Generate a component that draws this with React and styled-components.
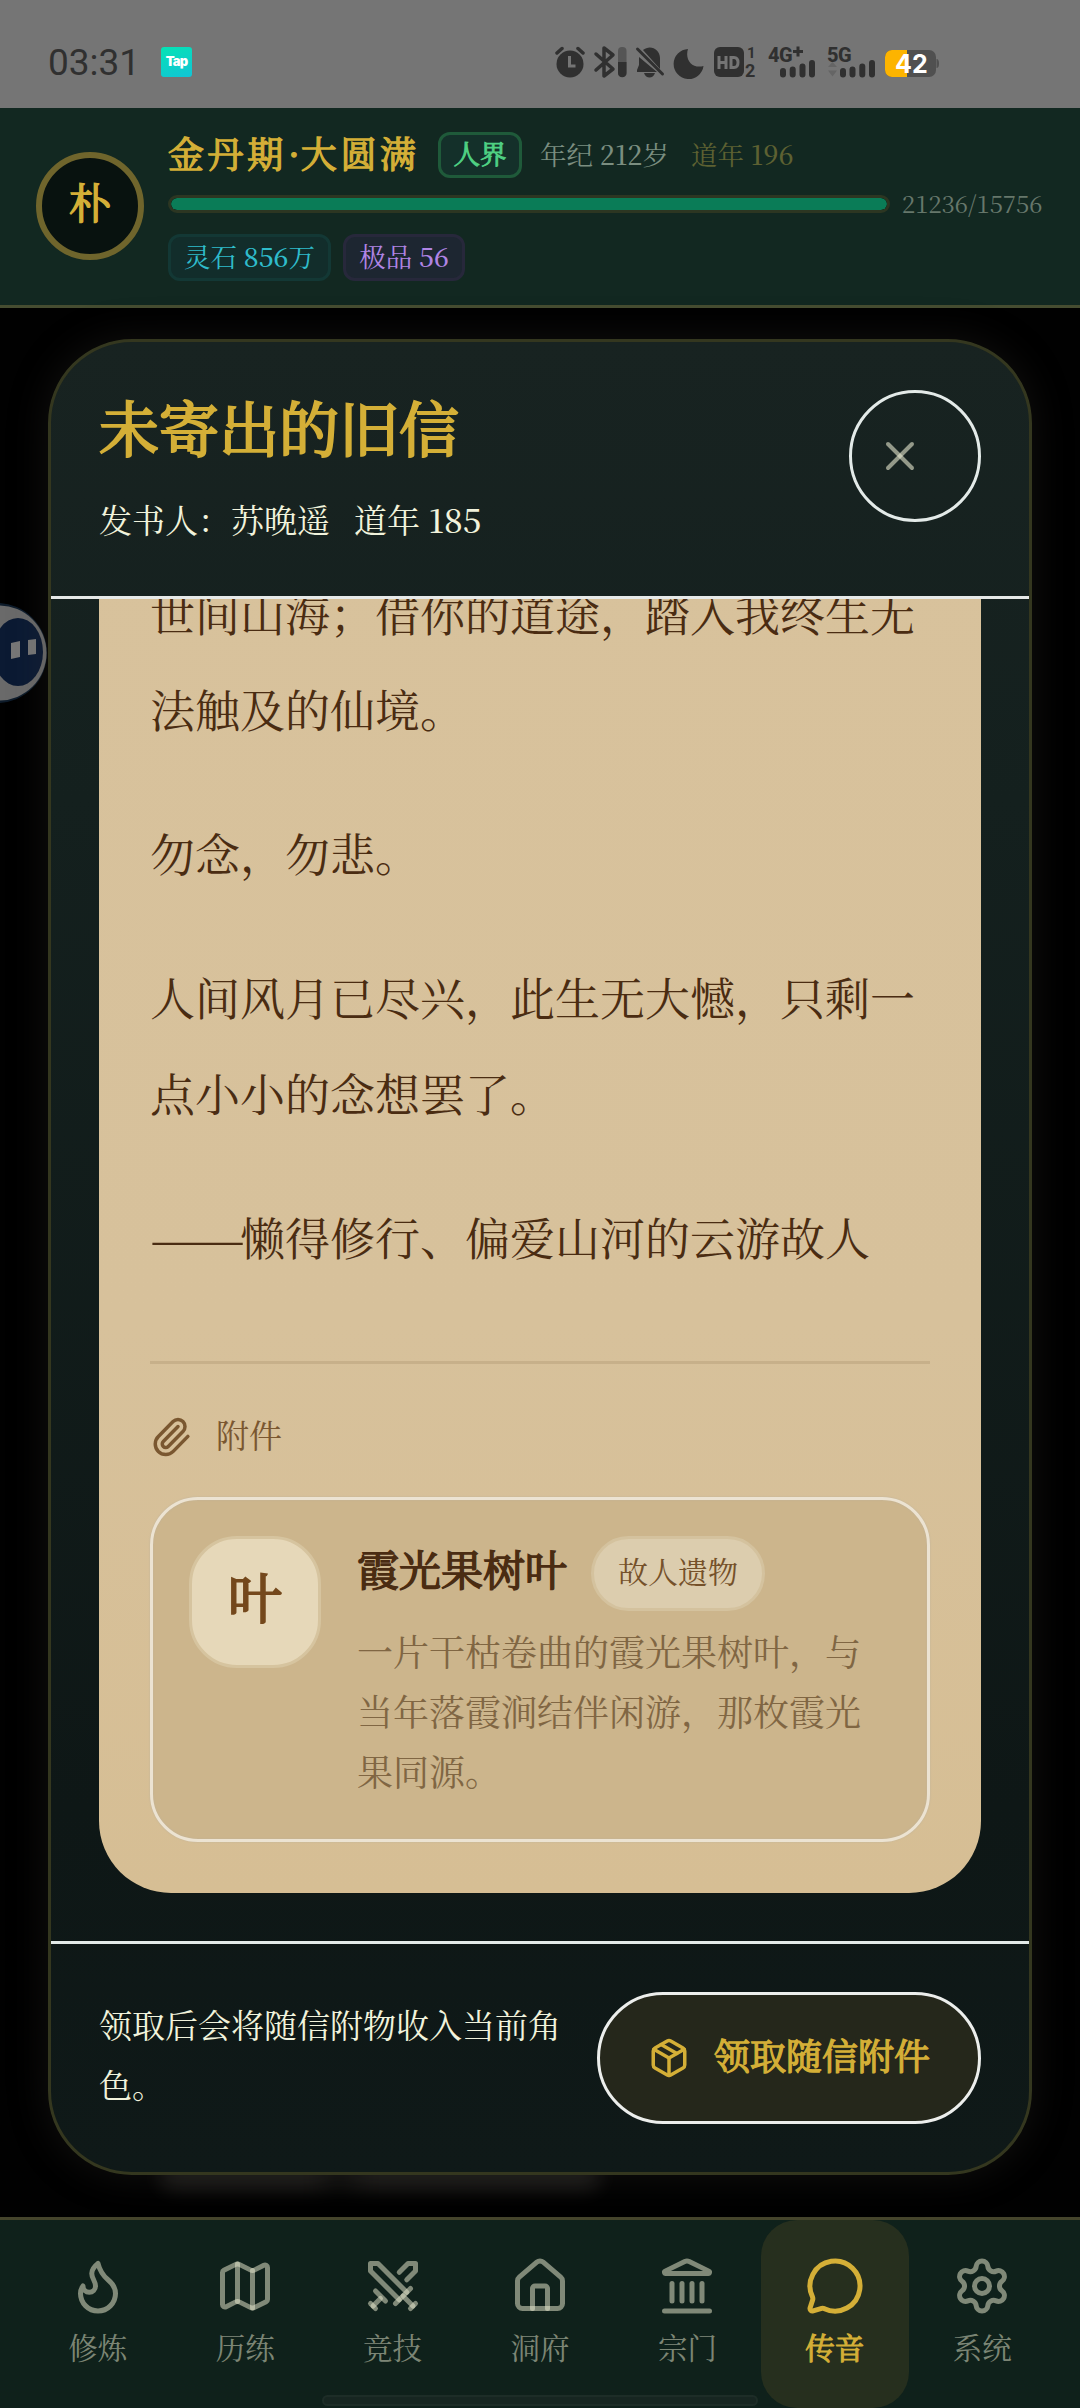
import React from 'react';
import styled, { createGlobalStyle, css } from 'styled-components';
import {
  Flame,
  House,
  Landmark,
  Map,
  MessageCircle,
  Package,
  Paperclip,
  Settings,
  Swords,
  X,
} from 'lucide-react';

const GlobalStyle = createGlobalStyle`
  * {
    box-sizing: border-box;
  }

  body {
    margin: 0;
    background: #000;
    font-family: "Noto Serif CJK SC", "Noto Serif SC", "Noto Sans CJK SC", serif;
    font-weight: 400;
  }

  p, h1, h2 {
    margin: 0;
    font-weight: inherit;
  }

  button {
    margin: 0;
    font-family: inherit;
    font-weight: inherit;
    cursor: pointer;
  }

  svg {
    display: block;
    flex-shrink: 0;
  }
`;

//even stroke on the regular weight, the bold cut has too much contrast
const bold = css`
  -webkit-text-stroke: 0.036em currentColor;
`;

const Screen = styled.div`
  position: relative;
  width: 1080px;
  height: 2408px;
  display: flex;
  flex-direction: column;
  overflow: hidden;
  background: #010101;
`;

//digits stand a little heavier than the characters beside them
const Num = styled.span`
  font-weight: 500;
`;

//status bar of the phone
const StatusBar = styled.div`
  height: 108px;
  padding: 18px 141px 0 48px;
  display: flex;
  align-items: center;
  flex-shrink: 0;
  background: #757575;
`;

const Clock = styled.div`
  width: 92px;
  font: 400 37px/44px Roboto, sans-serif;
  color: #303030;
`;

const TapBadge = styled.div`
  width: 31px;
  height: 30px;
  margin: 0 0 2px 21px;
  border-radius: 3px;
  background: linear-gradient(160deg, #04e3b4, #12c4d6);
  color: white;
  font: 900 13px/28px Inter, sans-serif;
  letter-spacing: -0.8px;
  text-align: center;
`;

const StatusIcons = styled.div`
  margin: 0 0 2px auto;
  display: flex;
  align-items: center;
`;

//player header
const Header = styled.header`
  height: 200px;
  padding: 0 36px 1px;
  display: flex;
  align-items: center;
  flex-shrink: 0;
  background: #122821;
  border-bottom: 3px solid #464d31;
`;

const Avatar = styled.div`
  width: 108px;
  height: 108px;
  margin-right: 24px;
  display: flex;
  align-items: center;
  justify-content: center;
  flex-shrink: 0;
  border: 6px solid #6f652c;
  border-radius: 50%;
  background: #08120f;
  color: #d4af37;
  font-size: 42px;
  line-height: 60px;
  padding-bottom: 10px;
  ${bold}
`;

const Profile = styled.div`
  flex: 1;
  display: flex;
  flex-direction: column;
`;

const ProfileRow = styled.div`
  display: flex;
  align-items: center;
  height: ${props => props.$height}px;
  margin-top: ${props => props.$top || 0}px;
`;

const Realm = styled.h1`
  width: 270px;
  padding-bottom: 4px;
  display: flex;
  color: #d4af37;
  font-size: 36px;
  line-height: 46px;
  letter-spacing: 3.6px;
  ${bold}
`;

const Dot = styled.span`
  width: 14px;
  display: flex;
  justify-content: center;
  letter-spacing: 0;
`;

const chipColors = {
  green: css`
    color: #4fd083;
    border-color: #1f5a3a;
    background: #14302a;
    ${bold}
  `,
  cyan: css`
    color: #2fbccb;
    border-color: #133835;
    background: #122d2b;
  `,
  purple: css`
    color: #b084e4;
    border-color: #27283b;
    background: #1d2631;
  `,
};

const Chip = styled.span`
  width: ${props => props.$width}px;
  height: ${props => props.$height || 47}px;
  margin-right: 12px;
  display: flex;
  align-items: center;
  justify-content: center;
  border: 3px solid;
  border-radius: 12px;
  font-size: 26.5px;
  white-space: pre;
  padding-bottom: 4px;
  ${props => chipColors[props.$color]}
`;

const Age = styled.span`
  width: 151px;
  margin-left: 6px;
  padding-bottom: 2px;
  color: #7b8e80;
  font-size: 26.5px;
  white-space: pre;
`;

const DaoYear = styled(Age)`
  margin-left: 0;
  color: #5d6132;
`;

const ExpTrack = styled.div`
  width: 722px;
  height: 18px;
  border: 3px solid #2c3622;
  border-radius: 9px;
  background: #08120f;
  overflow: hidden;
`;

const ExpFill = styled.div`
  height: 100%;
  border-radius: 6px;
  background: #0a7c57;
`;

const ExpText = styled.span`
  margin-left: 12px;
  padding-bottom: 2px;
  color: #66776b;
  font-size: 24px;
  line-height: 24px;
`;

//letter dialog
const Backdrop = styled.main`
  position: relative;
  flex: 1;
  min-height: 0;
  padding: 31px 48px 42px;
  display: flex;

  //blurred remains of the page under the dialog
  &::before {
    content: '';
    position: absolute;
    left: 160px;
    bottom: 28px;
    width: 440px;
    height: 24px;
    border-radius: 12px;
    background: linear-gradient(90deg, #1e1d1b 35%, #0c0c0b 40%, #1e1d1b 48%);
    filter: blur(10px);
  }
`;

const Letter = styled.section`
  position: relative;
  flex: 1;
  display: flex;
  flex-direction: column;
  overflow: hidden;
  border: 3px solid #34371f;
  border-radius: 84px;
  background: linear-gradient(#182321, #14201e 25%, #0e1716 80%, #0f1918);
  box-shadow: 0 0 40px rgba(70, 66, 60, 0.26);
`;

const LetterHeader = styled.div`
  height: 257px;
  padding: 48px;
  display: flex;
  align-items: flex-start;
  justify-content: space-between;
  flex-shrink: 0;
  border-bottom: 3px solid #e6e9e8;
`;

const LetterTitle = styled.h2`
  margin-top: -1px;
  color: #d4af37;
  font-size: 60px;
  line-height: 75px;
  ${bold}
`;

const Sender = styled.p`
  margin-top: 30px;
  color: #f1f3dc;
  font-size: 33px;
  line-height: 50px;
  white-space: pre;
`;

const SentAt = styled.span`
  margin-left: 24px;
`;

const CloseButton = styled.button`
  width: 132px;
  height: 132px;
  padding: 0 0 0 24px;
  display: flex;
  align-items: center;
  border: 3px solid #e3eae8;
  border-radius: 50%;
  background: transparent;
  color: rgba(232, 234, 208, 0.6);
`;

const LetterBody = styled.div`
  flex: 1;
  min-height: 0;
  padding: 0 48px 48px;
  display: flex;
  flex-direction: column;
  justify-content: flex-end; //scrolled to the end of the letter
  overflow: hidden;
`;

const Paper = styled.article`
  padding: 96px 51px 51px;
  flex-shrink: 0;
  border-radius: 72px;
  background: linear-gradient(#d8c29c, #d7c19b 60%, #d6be94);
  color: #4a2c12;
`;

const Paragraph = styled.p`
  margin-bottom: 48px;
  font-size: 45px;
  line-height: 96px;
`;

//the serif dash is narrower than two characters, stretch it to their width
const Dash = styled.span`
  display: inline-block;
  width: 90px;
  white-space: nowrap;
  transform: scaleX(1.25);
  transform-origin: left;
`;

const Attachments = styled.div`
  margin-top: 76px;
  padding-top: 48px;
  border-top: 3px solid #c7b08a;
`;

const AttachmentsLabel = styled.div`
  height: 49px;
  margin-bottom: 36px;
  display: flex;
  align-items: center;
  gap: 24px;
  color: #7a5730;
  font-size: 33px;

  span {
    padding-bottom: 6px;
  }
`;

const Item = styled.div`
  height: 345px;
  padding: 36px;
  display: flex;
  gap: 36px;
  border: 3px solid #ece3d2;
  border-radius: 48px;
  background: #ccb58c;
  box-shadow: 0 0 2px #bdb29d, inset 0 0 2px #bdb29d;
`;

const ItemIcon = styled.div`
  width: 132px;
  height: 132px;
  display: flex;
  align-items: center;
  justify-content: center;
  flex-shrink: 0;
  border: 3px solid #d6c49f;
  border-radius: 48px;
  background: #e6d8b9;
  color: #74481c;
  font-size: 54px;
  line-height: 80px;
  padding-bottom: 12px;
  ${bold}
`;

const ItemText = styled.div`
  flex: 1;
`;

const ItemHead = styled.div`
  display: flex;
  align-items: center;
  gap: 24px;
  height: 75px;
`;

const ItemName = styled.span`
  padding-bottom: 12px;
  font-size: 42px;
  line-height: 60px;
  ${bold}
`;

const ItemTag = styled.span`
  height: 75px;
  padding: 0 24px 7px;
  display: flex;
  align-items: center;
  border: 3px solid #d4c29e;
  border-radius: 38px;
  background: #dccdae;
  color: #75512a;
  font-size: 30px;
`;

const ItemDesc = styled.p`
  margin-top: 10px;
  color: #806643;
  font-size: 36px;
  line-height: 60px;
`;

const LetterFooter = styled.div`
  height: 231px;
  padding: 48px;
  display: flex;
  align-items: flex-start;
  gap: 36px;
  flex-shrink: 0;
  border-top: 3px solid #e3eae8;
`;

const Hint = styled.p`
  flex: 1;
  padding-top: 2px;
  color: #f1f3dc;
  font-size: 33px;
  line-height: 60px;
`;

const ClaimButton = styled.button`
  width: 384px;
  height: 132px;
  padding: 0;
  display: flex;
  align-items: center;
  justify-content: center;
  gap: 24px;
  border: 3px solid #eceeec;
  border-radius: 66px;
  background: #25271b;
  color: #d4af37;
  font-size: 36px;
  white-space: nowrap;

  span {
    padding-bottom: 8px;
    ${bold}
  }
`;

//bottom navigation
const Nav = styled.nav`
  height: 191px;
  padding: 0 24px;
  display: flex;
  flex-shrink: 0;
  border-top: 3px solid #45452c;
  background: #0f211b;
`;

const NavItem = styled.div`
  flex: 1;
  padding-top: 36px;
  display: flex;
  flex-direction: column;
  align-items: center;
  border-radius: 36px;
  background: ${props => (props.$active ? '#262f1e' : 'transparent')};
  color: ${props => (props.$active ? '#d4af37' : 'rgba(232, 234, 208, 0.52)')};
  font-size: 29.5px;
  line-height: 44px;

  svg {
    margin-bottom: 8px;
  }

  span {
    ${props => props.$active && bold}
  }
`;

const HomeIndicator = styled.div`
  position: absolute;
  left: 322px;
  bottom: 2px;
  width: 436px;
  height: 11px;
  border: 2px solid #1d2d27;
  border-radius: 6px;
  background: #172621;
`;

//assistant bubble docked at the left edge, dimmed by the dialog
const Assistant = styled.svg`
  position: absolute;
  left: 0;
  top: 600px;
`;

const NAV_ITEMS = [
  { label: '修炼', Icon: Flame },
  { label: '历练', Icon: Map },
  { label: '竞技', Icon: Swords },
  { label: '洞府', Icon: House },
  { label: '宗门', Icon: Landmark },
  { label: '传音', Icon: MessageCircle, active: true },
  { label: '系统', Icon: Settings },
];

const LETTER = [
  '世间山海；借你的道途，踏入我终生无法触及的仙境。',
  '勿念，勿悲。',
  '人间风月已尽兴，此生无大憾，只剩一点小小的念想罢了。',
];

//alarm, bluetooth, mute, do not disturb, HD, signals and battery
const PhoneIcons = () => (
  <StatusIcons>
    <svg width="384" height="36" viewBox="555 45 384 36" fill="#303030">
      <circle cx="570" cy="65" r="13.5" />
      <path d="M557 54l5-4.500M583 54l-5-4.500" stroke="#303030" strokeWidth="3.500" strokeLinecap="round" />
      <path d="M569.500 57v10h6" fill="none" stroke="#757575" strokeWidth="3" />

      <path
        d="M596 55l17 15-9 7V49l9 7-17 15"
        fill="none"
        stroke="#303030"
        strokeWidth="3.500"
        strokeLinejoin="round"
        strokeLinecap="round"
      />
      <rect x="618" y="48" width="8.500" height="30" rx="4" fill="#555" />
      <path d="M618 63h8.500v11a4 4 0 0 1-8.500 0z" />

      <path d="M643 51c7-6 17-1 17 8v11zM639 58v8l-2 5v2h20zM644 74h11c-2 6-9 6-11 0z" />
      <path d="M637.500 50l25 25" stroke="#303030" strokeWidth="3" strokeLinecap="round" />

      <path d="M688 50a15 15 0 1 0 15.500 17c-11 3-19-6-15.500-17z" />

      <rect x="714" y="48" width="30" height="30" rx="6" />
      <path d="M719 57v13M726 57v13M719 63.500h7M731 58.500h3q4 0 4 5t-4 5h-3z" fill="none" stroke="#757575" strokeWidth="3" />
      <text x="747" y="59" fontFamily="Roboto" fontSize="15" fontWeight="700">1</text>
      <text x="745" y="78" fontFamily="Roboto" fontSize="18" fontWeight="700">2</text>

      <text x="768" y="63" fontFamily="Roboto" fontSize="20" fontWeight="800" letterSpacing="-0.500">4G</text>
      <path d="M793 52.500h10M798 47.500v10" stroke="#303030" strokeWidth="3" />
      <path d="M783 72v3.500M792.700 70.500v5M802.500 67.500v8M812 64v11.500" stroke="#303030" strokeWidth="6" strokeLinecap="round" />

      <text x="827" y="63" fontFamily="Roboto" fontSize="20" fontWeight="800" letterSpacing="-0.500">5G</text>
      <path d="M828 68l4.500-5 4.500 5zM828 71.500l4.500 6 4.500-6z" fill="#656565" />
      <path d="M843 72v3.500M852.500 70.500v5M862.300 67.500v8M872 64v11.500" stroke="#303030" strokeWidth="6" strokeLinecap="round" />

      <rect x="885" y="51" width="51" height="27" rx="7" fill="#505050" />
      <path d="M892 51h15v27h-15a7 7 0 0 1-7-7V58a7 7 0 0 1 7-7z" fill="#fdb400" />
      <path d="M936.500 60q2.500 0 2.500 4.500t-2.500 4.500z" fill="#505050" />
      <text x="895" y="74" fontFamily="Inter" fontSize="25" fontWeight="700" fill="#fff">42</text>
    </svg>
  </StatusIcons>
);

const PlayerHeader = () => (
  <Header>
    <Avatar>朴</Avatar>
    <Profile>
      <ProfileRow $height={46}>
        <Realm>金丹期<Dot>·</Dot>大圆满</Realm>
        <Chip $color="green" $width={84} $height={46}>人界</Chip>
        <Age>年纪 <Num>212</Num>岁</Age>
        <DaoYear>道年 <Num>196</Num></DaoYear>
      </ProfileRow>
      <ProfileRow $height={24} $top={14}>
        <ExpTrack>
          <ExpFill />
        </ExpTrack>
        <ExpText>21236/15756</ExpText>
      </ProfileRow>
      <ProfileRow $height={47} $top={18}>
        <Chip $color="cyan" $width={163}>灵石 <Num>856</Num>万</Chip>
        <Chip $color="purple" $width={122}>极品 <Num>56</Num></Chip>
      </ProfileRow>
    </Profile>
  </Header>
);

const LetterDialog = () => (
  <Letter>
    <LetterHeader>
      <div>
        <LetterTitle>未寄出的旧信</LetterTitle>
        <Sender>发书人：苏晚遥<SentAt>道年 <Num>185</Num></SentAt></Sender>
      </div>
      <CloseButton>
        <X size={48} />
      </CloseButton>
    </LetterHeader>
    <LetterBody>
      <Paper>
        {LETTER.map(text => (
          <Paragraph key={text}>{text}</Paragraph>
        ))}
        <Paragraph><Dash>——</Dash>懒得修行、偏爱山河的云游故人</Paragraph>
        <Attachments>
          <AttachmentsLabel>
            <Paperclip size={42} />
            <span>附件</span>
          </AttachmentsLabel>
          <Item>
            <ItemIcon>叶</ItemIcon>
            <ItemText>
              <ItemHead>
                <ItemName>霞光果树叶</ItemName>
                <ItemTag>故人遗物</ItemTag>
              </ItemHead>
              <ItemDesc>一片干枯卷曲的霞光果树叶，与当年落霞涧结伴闲游，那枚霞光果同源。</ItemDesc>
            </ItemText>
          </Item>
        </Attachments>
      </Paper>
    </LetterBody>
    <LetterFooter>
      <Hint>领取后会将随信附物收入当前角色。</Hint>
      <ClaimButton>
        <Package size={42} />
        <span>领取随信附件</span>
      </ClaimButton>
    </LetterFooter>
  </Letter>
);

function App() {
  return (
    <Screen>
      <GlobalStyle />
      <StatusBar>
        <Clock>03:31</Clock>
        <TapBadge>Tap</TapBadge>
        <PhoneIcons />
      </StatusBar>
      <PlayerHeader />
      <Assistant width="48" height="106" viewBox="0 0 48 106">
        <circle cx="-3" cy="53" r="50" fill="#0e1c2b" />
        <circle cx="-1" cy="53" r="47.500" fill="#6a6a6a" />
        <ellipse cx="18" cy="52" rx="25" ry="34" fill="#0b1a33" />
        <path d="M11 43l9-2v16l-9 2zM28 40l8-1v15l-8 1z" fill="#777" />
      </Assistant>
      <Backdrop>
        <LetterDialog />
      </Backdrop>
      <Nav>
        {NAV_ITEMS.map(({ label, Icon, active }) => (
          <NavItem key={label} $active={active}>
            <Icon size={60} />
            <span>{label}</span>
          </NavItem>
        ))}
      </Nav>
      <HomeIndicator />
    </Screen>
  );
}

export default App;
